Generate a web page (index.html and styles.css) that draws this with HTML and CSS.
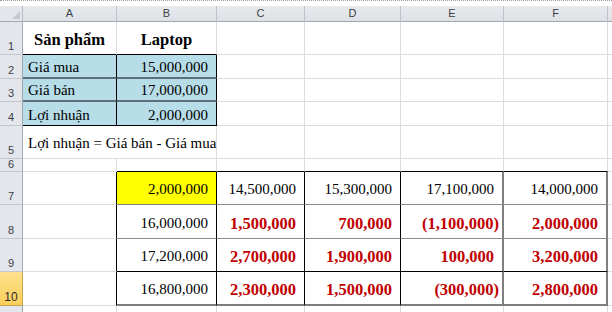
FILE: index.html
```html
<!DOCTYPE html>
<html lang="vi">
<head>
<meta charset="utf-8">
<title>Sheet</title>
<link rel="stylesheet" href="styles.css">
</head>
<body>
<div class="top-dash"></div>
<div class="sheet">
  <div class="corner"><span class="tri"></span></div>
  <div class="ch">A</div><div class="ch">B</div><div class="ch">C</div><div class="ch">D</div><div class="ch">E</div><div class="ch">F</div><div class="ch last"></div>

  <div class="rh">1</div>
  <div class="c mid center bold under">Sản phẩm</div>
  <div class="c mid center bold under">Laptop</div>
  <div class="c"></div><div class="c"></div><div class="c"></div><div class="c"></div><div class="c end"></div>

  <div class="rh">2</div>
  <div class="c blue sep">Giá mua</div>
  <div class="c blue sep num">15,000,000</div>
  <div class="c"></div><div class="c"></div><div class="c"></div><div class="c"></div><div class="c end"></div>

  <div class="rh">3</div>
  <div class="c blue sep">Giá bán</div>
  <div class="c blue sep num">17,000,000</div>
  <div class="c"></div><div class="c"></div><div class="c"></div><div class="c"></div><div class="c end"></div>

  <div class="rh">4</div>
  <div class="c blue last-blue">Lợi nhuận</div>
  <div class="c blue last-blue num">2,000,000</div>
  <div class="c"></div><div class="c"></div><div class="c"></div><div class="c"></div><div class="c end"></div>

  <div class="rh">5</div>
  <div class="c mid span2">Lợi nhuận = Giá bán - Giá mua</div>
  <div class="c"></div><div class="c"></div><div class="c"></div><div class="c"></div><div class="c end"></div>

  <div class="rh small">6</div>
  <div class="c"></div>
  <div class="c ttop"></div><div class="c ttop"></div><div class="c ttop"></div><div class="c ttop ef"></div><div class="c ttop redge"></div><div class="c end"></div>

  <div class="rh">7</div>
  <div class="c tleft"></div>
  <div class="c mid num yellow rb hb">2,000,000</div>
  <div class="c mid num rb hg">14,500,000</div>
  <div class="c mid num rb hg">15,300,000</div>
  <div class="c mid num ef hg">17,100,000</div>
  <div class="c mid num redge hg">14,000,000</div>
  <div class="c end"></div>

  <div class="rh">8</div>
  <div class="c tleft"></div>
  <div class="c mid num rb hg">16,000,000</div>
  <div class="c mid num red rb hg">1,500,000</div>
  <div class="c mid num red rb hg">700,000</div>
  <div class="c mid num red neg ef hg">(1,100,000)</div>
  <div class="c mid num red redge hg">2,000,000</div>
  <div class="c end"></div>

  <div class="rh">9</div>
  <div class="c tleft"></div>
  <div class="c mid num rb hb">17,200,000</div>
  <div class="c mid num red rb hb">2,700,000</div>
  <div class="c mid num red rb hb">1,900,000</div>
  <div class="c mid num red ef hb">100,000</div>
  <div class="c mid num red redge hb">3,200,000</div>
  <div class="c end"></div>

  <div class="rh sel">10</div>
  <div class="c tleft"></div>
  <div class="c mid num rb hbot">16,800,000</div>
  <div class="c mid num red rb hbot">2,300,000</div>
  <div class="c mid num red rb hbot">1,500,000</div>
  <div class="c mid num red neg ef hbot">(300,000)</div>
  <div class="c mid num red redge hbot">2,800,000</div>
  <div class="c end"></div>

  <div class="rh"></div>
  <div class="c"></div><div class="c"></div><div class="c"></div><div class="c"></div><div class="c"></div><div class="c"></div><div class="c end"></div>
</div>
</body>
</html>
```

FILE: styles.css
```css
html, body {
  margin: 0;
  padding: 0;
  background: #ffffff;
  overflow: hidden;
}

.top-dash {
  height: 0;
  border-top: 1px dotted #9a9a9a;
  margin-bottom: 5px;
}

.sheet {
  display: grid;
  grid-template-columns: 23px 94px 100px 88px 96px 103px 104px 4px;
  grid-template-rows: 16px 33px 24px 23px 24px 33px 13px 33px 34px 33px 34px 10px;
  font-family: "Liberation Serif", "Times New Roman", serif;
  font-size: 15px;
  color: #000;
}

.sheet > div {
  box-sizing: border-box;
  min-width: 0;
}

/* headers */
.corner {
  background: #e3e6ea;
  border-right: 1px solid #b6bcc4;
  border-bottom: 1px solid #9fa7b1;
  display: flex;
  justify-content: flex-end;
  align-items: flex-end;
  padding: 0 2px 2px 0;
}
.tri {
  width: 0;
  height: 0;
  border-left: 8px solid transparent;
  border-bottom: 8px solid #c6cacf;
}

.ch {
  background: linear-gradient(#e8eaed, #dde1e6);
  border-right: 1px solid #bcc2ca;
  border-bottom: 1px solid #9fa7b1;
  font-family: "Liberation Sans", Arial, sans-serif;
  font-size: 11px;
  color: #3a3f46;
  display: flex;
  align-items: center;
  justify-content: center;
  line-height: 1;
}
.ch.last {
  border-right: none;
}

.rh {
  background: #e3e6ea;
  border-right: 1px solid #9fa7b1;
  border-bottom: 1px solid #c3c8cf;
  font-family: "Liberation Sans", Arial, sans-serif;
  font-size: 11px;
  color: #3a3f46;
  display: flex;
  align-items: flex-end;
  justify-content: center;
  padding-bottom: 2px;
  line-height: 12px;
}
.rh.small {
  align-items: flex-start;
  padding: 0;
  line-height: 11px;
  overflow: hidden;
}
.rh.sel {
  background: linear-gradient(#fde18c, #f9cf5c);
  border-right: 1px solid #c9a24e;
  border-bottom: 1px solid #c9a24e;
  color: #2b2b2b;
  font-size: 12px;
}

/* cells */
.c {
  border-right: 1px solid #dadcdd;
  border-bottom: 1px solid #dadcdd;
  display: flex;
  align-items: flex-end;
  padding: 0 4px 1px 5px;
  line-height: 17px;
  white-space: nowrap;
}
.c.end {
  border-right: none;
}
.c.mid {
  align-items: center;
  padding-top: 3px;
  padding-bottom: 0;
}
.c.center {
  justify-content: center;
  padding-left: 0;
  padding-right: 0;
}
.bold {
  font-weight: bold;
  font-size: 16.5px;
}
.under {
  border-bottom: 1px solid #000 !important;
}
.span2 {
  grid-column: span 2;
}

.num {
  justify-content: flex-end;
  padding-right: 8px;
}
.num.neg {
  padding-right: 3px;
}
.red {
  color: #c00000;
  font-weight: bold;
  font-size: 16.5px;
}

.blue {
  background: #b7dde8;
  border-right: 1px solid #000;
}
.blue.sep {
  border-bottom: 2px solid #5b7079;
}
.blue.last-blue {
  border-bottom: 1px solid #000;
}

.yellow {
  background: #ffff00;
}

/* result table borders */
.ttop {
  border-bottom: 1px solid #000;
}
.tleft {
  border-right: 1px solid #000;
}
.rb {
  border-right: 1px solid #000;
}
.ef {
  border-right: 2px solid #7f7f7f;
}
.redge {
  border-right: 2px solid #7f7f7f;
}
.ttop.ef {
  border-right: 1px solid #dadcdd;
}
.ttop.redge {
  border-right: 1px solid #dadcdd;
}
.hg {
  border-bottom: 1px solid #8c8c8c;
}
.hb {
  border-bottom: 1px solid #000;
}
.hbot {
  border-bottom: 2px solid #7f7f7f;
}
.yellow.hb {
  border-bottom: 1px solid #7f7f7f;
}
```
